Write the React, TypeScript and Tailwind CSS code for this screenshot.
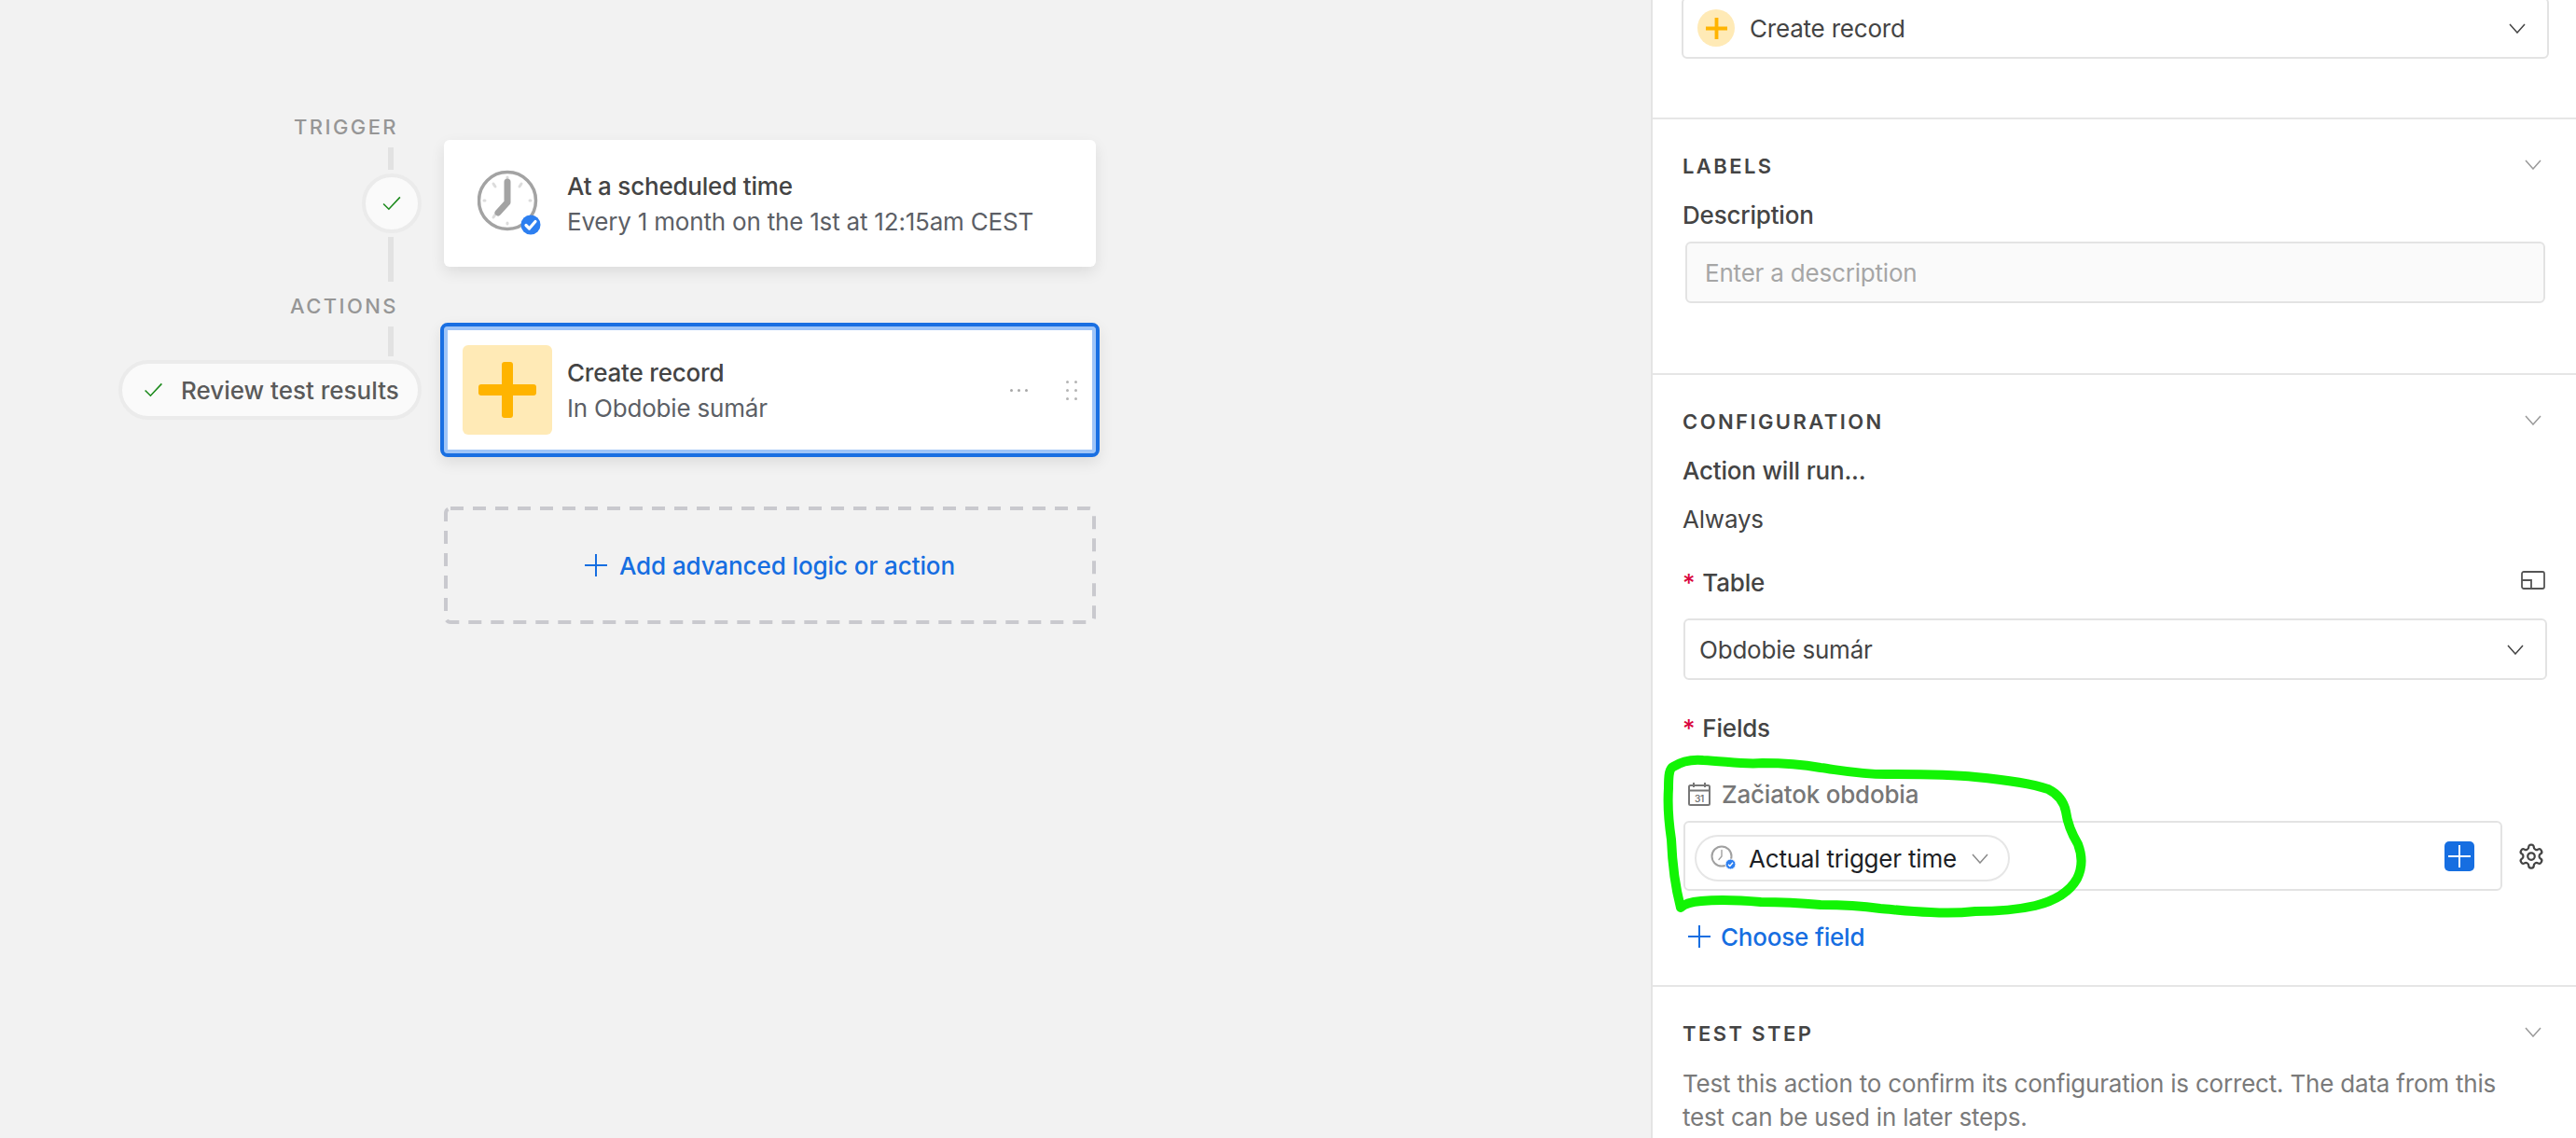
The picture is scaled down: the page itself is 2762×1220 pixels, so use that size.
const Divider = () => <div className="h-[2px] bg-[#e6e6e6]" />;

const Connector = ({ className }: { className: string }) => (
  <div className={`mr-[30px] w-[6px] bg-[#e2e2e2] ${className}`} />
);

const RailLabel = ({ text, className }: { text: string; className: string }) => (
  <div className={`mr-[25px] h-[24px] text-[22px] leading-[24px] font-medium tracking-[0.11em] text-[#969696] ${className}`}>
    {text}
  </div>
);

const Check = ({ className }: { className: string }) => (
  <svg viewBox="0 0 22 18" fill="none" stroke="#1c8a1c" strokeWidth="1.8" className={className}>
    <path d="M1 9.5 L7.5 16 L21 1.5" />
  </svg>
);

// lucide's chevron and plus are too small for their box here, so these two are drawn to size
const Chevron = ({ className }: { className: string }) => (
  <svg width="18" height="11" viewBox="0 0 18 11" fill="none" stroke="currentColor" strokeWidth="1.5" className={`shrink-0 ${className}`}>
    <path d="M1 1 L9 10 L17 1" />
  </svg>
);

const Cross = ({ size, width, className }: { size: number; width: number; className: string }) => (
  <svg width={size} height={size} viewBox="0 0 24 24" stroke="currentColor" strokeWidth={width} className={`shrink-0 ${className}`}>
    <path d="M12 0V24M0 12H24" />
  </svg>
);

const SectionHeader = ({ title }: { title: string }) => (
  <div className="flex h-[36px] items-center justify-between">
    <span className="text-[22px] leading-[36px] font-semibold tracking-[0.11em] text-[#444444]">{title}</span>
    <Chevron className="mr-[4px] -mt-[4px] text-[#9a9a9a]" />
  </div>
);

const TextRow = ({ children, className = "" }: { children: React.ReactNode; className?: string }) => (
  <div className={`h-[36px] text-[26px] leading-[36px] text-[#444444] ${className}`}>{children}</div>
);

const BigClock = () => (
  <svg width="72" height="72" viewBox="0 0 72 72" fill="none" className="shrink-0">
    <circle cx="32" cy="33" r="30.5" stroke="#a3a3a3" strokeWidth="3.5" />
    <g stroke="#dcdcdc" strokeWidth="3" strokeLinecap="round">
      <path d="M32 8v1M32 57v1M7 33h1M56 33h1M17 15l2 3M47 15l-2 3M17 51l2-3" />
    </g>
    <path d="M32 13 V35 L22 46" stroke="#a3a3a3" strokeWidth="7" strokeLinecap="round" strokeLinejoin="round" />
    <circle cx="57" cy="59" r="10.5" fill="#2d7ff0" />
    <path d="M52 59.5 L55.5 63 L62 55.5" stroke="#fff" strokeWidth="3.2" strokeLinecap="round" strokeLinejoin="round" />
  </svg>
);

const YellowPlus = () => (
  <svg width="62" height="60" viewBox="0 0 62 60" fill="#ffb400">
    <rect x="25" y="0" width="12" height="60" rx="3" />
    <rect x="0" y="24" width="62" height="12" rx="3" />
  </svg>
);

const Dots = () => (
  <div className="ml-auto mr-[20px] flex items-center gap-[41px]">
    <div className="flex gap-[5px]">
      <span className="size-[3px] rounded-full bg-[#a8a8a8]" />
      <span className="size-[3px] rounded-full bg-[#a8a8a8]" />
      <span className="size-[3px] rounded-full bg-[#a8a8a8]" />
    </div>
    <div className="grid grid-cols-2 gap-x-[6px] gap-y-[6px]">
      {[0, 1, 2, 3, 4, 5].map((i) => (
        <span key={i} className="size-[3px] rounded-full bg-[#b4b4b4]" />
      ))}
    </div>
  </div>
);

const SmallClock = () => (
  <svg width="28" height="28" viewBox="0 0 28 28" fill="none" className="shrink-0">
    <circle cx="12" cy="12" r="10.5" stroke="#a0a0a0" strokeWidth="2" />
    <path d="M12 5.5V12L9 15.5" stroke="#a0a0a0" strokeWidth="1.4" strokeLinecap="round" />
    <circle cx="21.5" cy="20.5" r="5.5" fill="#2d7ff0" stroke="#fff" strokeWidth="1" />
    <path d="M19 20.7 L20.8 22.4 L24 18.8" stroke="#fff" strokeWidth="1.4" />
  </svg>
);

const CalendarIcon = () => (
  <svg width="24" height="26" viewBox="0 0 24 26" fill="none" stroke="#777777" strokeWidth="2" className="shrink-0">
    <rect x="1" y="4" width="22" height="21" rx="1.5" />
    <path d="M1 9.5h22M6 1v5M18 1v5" />
    <text x="12" y="21.5" textAnchor="middle" fontSize="10" fontWeight="600" fill="#777777" stroke="none" fontFamily="Inter, sans-serif">
      31
    </text>
  </svg>
);

const Scribble = () => (
  <svg width="470" height="180" viewBox="1780 808 470 180" fill="none" className="absolute left-[1780px] top-[808px]">
    <path
      d="M1802 973 C1796 950 1793 925 1792 900 C1789 880 1788 860 1789 845 C1789 830 1790 824 1794 822 C1805 815 1815 814 1826 815 C1850 816 1870 820 1890 818 C1915 818 1935 820 1952 823 C1975 826 2000 831 2028 830 C2060 830 2090 830 2118 833 C2150 836 2178 840 2196 846 C2208 852 2213 860 2215 870 C2217 885 2222 895 2228 905 C2233 918 2233 930 2227 942 C2218 958 2202 966 2182 971 C2160 976 2140 977 2118 977 C2100 979 2085 979 2070 978 C2045 977 2030 975 2016 974 C1995 971 1975 970 1952 970 C1930 968 1910 967 1888 967 C1865 965 1845 964 1824 966 C1812 967 1806 969 1802 973"
      stroke="#12f404"
      strokeWidth="10"
      strokeLinecap="round"
    />
  </svg>
);

export default function App() {
  return (
    <div className="relative flex h-[1220px] w-[2762px] overflow-hidden bg-[#f2f2f2] font-['Inter',sans-serif] tracking-[-0.2px]">
      {/* canvas */}
      <div className="flex flex-1 gap-[24px] pl-[127px]">
        <div className="flex w-[325px] flex-col items-end">
          <RailLabel text="TRIGGER" className="mt-[124px]" />
          <Connector className="mt-[10px] h-[24px]" />
          <div className="mr-0 mt-[4px] flex size-[64px] items-center justify-center self-end rounded-full border-[4px] border-[#ebebeb] bg-[#fafafa]">
            <Check className="h-[16px] w-[20px]" />
          </div>
          <Connector className="mt-[4px] h-[48px]" />
          <RailLabel text="ACTIONS" className="mt-[14px]" />
          <Connector className="mt-[10px] h-[32px]" />
          <div className="mt-[4px] flex h-[64px] w-[325px] items-center rounded-full border-[4px] border-[#ebebeb] bg-[#fafafa] pl-[23px]">
            <Check className="h-[16px] w-[21px]" />
            <span className="ml-[19px] text-[26px] font-medium tracking-normal text-[#5a5a5a]">Review test results</span>
          </div>
        </div>

        <div className="flex w-[699px] flex-col pt-[150px]">
          <div className="flex h-[136px] items-center rounded-[6px] bg-white pl-[36px] shadow-[0_6px_16px_rgba(0,0,0,0.09)]">
            <BigClock />
            <div className="ml-[24px] flex flex-col pt-[2px]">
              <span className="text-[26px] leading-[38px] font-medium text-[#444444]">At a scheduled time</span>
              <span className="text-[26px] leading-[38px] text-[#5c5f66]">Every 1 month on the 1st at 12:15am CEST</span>
            </div>
          </div>

          <div className="-mx-[4px] mt-[60px] flex h-[144px] items-center rounded-[8px] border-[4px] border-[#196fe2] bg-white pl-[20px] shadow-[inset_0_0_0_4px_#9fc5f8,0_6px_16px_rgba(0,0,0,0.09)]">
            <div className="flex h-[96px] w-[96px] shrink-0 items-center justify-center rounded-[6px] bg-[#ffeab6]">
              <YellowPlus />
            </div>
            <div className="ml-[16px] flex flex-col pt-[2px]">
              <span className="text-[26px] leading-[38px] font-medium text-[#444444]">Create record</span>
              <span className="text-[26px] leading-[38px] text-[#5c5f66]">In Obdobie sumár</span>
            </div>
            <Dots />
          </div>

          <div className="relative mt-[53px] flex h-[126px] items-center justify-center gap-[13px]">
            <svg className="absolute inset-0 h-full w-full" fill="none">
              <rect x="2" y="2" width="695" height="122" rx="5" stroke="#c9c9ce" strokeWidth="4" strokeDasharray="14 10" />
            </svg>
            <Cross size={24} width={2} className="text-[#166ee1]" />
            <span className="text-[26px] font-medium tracking-[-0.1px] text-[#166ee1]">Add advanced logic or action</span>
          </div>
        </div>
      </div>

      {/* side panel */}
      <div className="w-[992px] shrink-0 border-l-[2px] border-[#e4e4e4] bg-white">
        <div className="flex h-[126px] flex-col pl-[31px] pr-[29px]">
          <div className="-mt-[3px] flex h-[66px] items-center rounded-[6px] border-[2px] border-[#e3e3e3] pl-[15px] pr-[23px]">
            <div className="flex size-[40px] items-center justify-center rounded-full bg-[#ffeab6]">
              <Cross size={23} width={4} className="text-[#ffb400]" />
            </div>
            <span className="ml-[16px] text-[26px] text-[#444444]">Create record</span>
            <Chevron className="ml-auto text-[#444444]" />
          </div>
        </div>
        <Divider />

        <div className="h-[272px] pl-[32px] pr-[33px] pt-[32px]">
          <SectionHeader title="LABELS" />
          <TextRow className="mt-[17px] font-medium">Description</TextRow>
          <div className="ml-[3px] mt-[10px] flex h-[66px] items-center rounded-[6px] border-[2px] border-[#e3e3e3] bg-[#fafafa] pl-[19px] text-[26px] text-[#a6a6a6]">
            Enter a description
          </div>
        </div>
        <Divider />

        <div className="h-[654px] pl-[32px] pr-[33px] pt-[32px]">
          <SectionHeader title="CONFIGURATION" />
          <TextRow className="mt-[17px] font-medium">Action will run...</TextRow>
          <TextRow className="mt-[16px]">Always</TextRow>
          <div className="mt-[32px] flex h-[36px] items-center justify-between">
            <TextRow className="font-medium">
              <span className="mr-[8px] text-[#d9043d]">*</span>Table
            </TextRow>
            <svg width="26" height="20" viewBox="0 0 26 20" fill="none" stroke="#555555" strokeWidth="1.8" className="-mt-[6px]">
              <rect x="1" y="1" width="24" height="18" rx="2" />
              <path d="M1 10h10v9" />
            </svg>
          </div>
          <div className="-mr-[2px] ml-[1px] mt-[20px] flex h-[66px] items-center rounded-[6px] border-[2px] border-[#e3e3e3] pl-[15px] pr-[23px] text-[26px] text-[#444444]">
            Obdobie sumár
            <Chevron className="ml-auto" />
          </div>
          <TextRow className="mt-[34px] font-medium">
            <span className="mr-[8px] text-[#d9043d]">*</span>Fields
          </TextRow>
          <div className="mt-[34px] flex h-[36px] items-center gap-[12px] pl-[6px]">
            <CalendarIcon />
            <span className="text-[26px] font-medium text-[#777777]">Začiatok obdobia</span>
          </div>
          <div className="ml-[1px] mt-[11px] flex items-center gap-[16px]">
            <div className="flex h-[75px] w-[879px] items-center rounded-[6px] border-[2px] border-[#e3e3e3] pl-[10px] pr-[28px]">
              <div className="mt-[5px] flex h-[50px] w-[338px] items-center rounded-full border-[2px] border-[#e6e6e6] pl-[15px]">
                <SmallClock />
                <span className="ml-[13px] text-[26px] text-[#1d1f25]">Actual trigger time</span>
                <Chevron className="ml-[16px] text-[#8a8a8a]" />
              </div>
              <div className="ml-auto flex size-[32px] items-center justify-center rounded-[5px] bg-[#166ee1]">
                <Cross size={24} width={2} className="text-white" />
              </div>
            </div>
            <svg width="30" height="30" viewBox="0 0 24 24" fill="none" stroke="#444444" strokeWidth="1.8" strokeLinecap="round" strokeLinejoin="round" className="shrink-0">
              <path d="M12.22 2h-.44a2 2 0 0 0-2 2v.18a2 2 0 0 1-1 1.73l-.43.25a2 2 0 0 1-2 0l-.15-.08a2 2 0 0 0-2.73.73l-.22.38a2 2 0 0 0 .73 2.73l.15.1a2 2 0 0 1 1 1.72v.51a2 2 0 0 1-1 1.74l-.15.09a2 2 0 0 0-.73 2.73l.22.38a2 2 0 0 0 2.73.73l.15-.08a2 2 0 0 1 2 0l.43.25a2 2 0 0 1 1 1.73V20a2 2 0 0 0 2 2h.44a2 2 0 0 0 2-2v-.18a2 2 0 0 1 1-1.73l.43-.25a2 2 0 0 1 2 0l.15.08a2 2 0 0 0 2.73-.73l.22-.39a2 2 0 0 0-.73-2.73l-.15-.08a2 2 0 0 1-1-1.74v-.5a2 2 0 0 1 1-1.74l.15-.09a2 2 0 0 0 .73-2.73l-.22-.38a2 2 0 0 0-2.73-.73l-.15.08a2 2 0 0 1-2 0l-.43-.25a2 2 0 0 1-1-1.73V4a2 2 0 0 0-2-2z" />
              <circle cx="12" cy="12" r="3" />
            </svg>
          </div>
          <div className="mt-[31px] flex h-[36px] items-center gap-[11px] pl-[6px]">
            <Cross size={24} width={2} className="text-[#166ee1]" />
            <span className="text-[26px] font-medium text-[#166ee1]">Choose field</span>
          </div>
        </div>
        <Divider />

        <div className="pl-[32px] pr-[60px] pt-[32px]">
          <div className="-mr-[27px]">
            <SectionHeader title="TEST STEP" />
          </div>
          <p className="mt-[18px] text-[26px] leading-[36px] text-[#7a7a7a]">
            Test this action to confirm its configuration is correct. The data from this test can be used in later steps.
          </p>
        </div>
      </div>

      <Scribble />
    </div>
  );
}
